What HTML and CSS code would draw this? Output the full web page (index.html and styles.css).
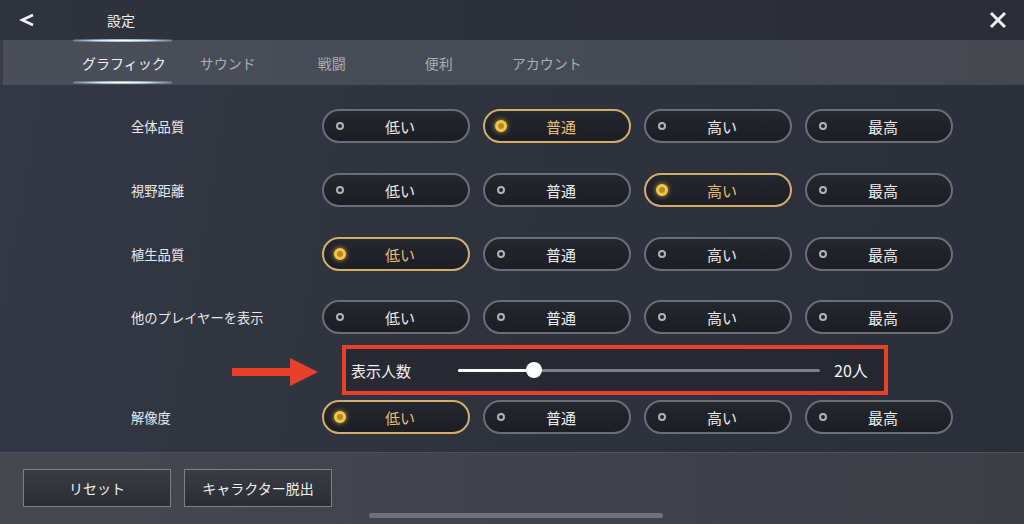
FILE: index.html
```html
<!DOCTYPE html>
<html lang="ja">
<head>
  <meta charset="UTF-8">
  <title>設定</title>
  <link rel="stylesheet" href="styles.css">
</head>
<body>

<div class="screen">
  <div class="topbar">
    <svg class="back" width="16" height="14" viewBox="0 0 16 14"><path d="M14 2 L3 7 L14 12" fill="none" stroke="#f2f2f2" stroke-width="2.6" stroke-linejoin="miter"/></svg>
    <span class="title">設定</span>
    <svg class="close" width="18" height="18" viewBox="0 0 18 18"><path d="M2 2 L16 16 M16 2 L2 16" stroke="#eeeeee" stroke-width="3"/></svg>
  </div>

  <div class="tabs">
    <span class="tab active">グラフィック</span>
    <span class="tab t2">サウンド</span>
    <span class="tab t3">戦闘</span>
    <span class="tab t4">便利</span>
    <span class="tab t5">アカウント</span>
  </div>

  <div class="content">
    <div class="row">
      <span class="label">全体品質</span>
      <div class="options">
        <div class="opt"><i class="dot"></i>低い</div>
        <div class="opt on"><i class="dot"></i>普通</div>
        <div class="opt"><i class="dot"></i>高い</div>
        <div class="opt"><i class="dot"></i>最高</div>
      </div>
    </div>
    <div class="row">
      <span class="label">視野距離</span>
      <div class="options">
        <div class="opt"><i class="dot"></i>低い</div>
        <div class="opt"><i class="dot"></i>普通</div>
        <div class="opt on"><i class="dot"></i>高い</div>
        <div class="opt"><i class="dot"></i>最高</div>
      </div>
    </div>
    <div class="row">
      <span class="label">植生品質</span>
      <div class="options">
        <div class="opt on"><i class="dot"></i>低い</div>
        <div class="opt"><i class="dot"></i>普通</div>
        <div class="opt"><i class="dot"></i>高い</div>
        <div class="opt"><i class="dot"></i>最高</div>
      </div>
    </div>
    <div class="row">
      <span class="label">他のプレイヤーを表示</span>
      <div class="options">
        <div class="opt"><i class="dot"></i>低い</div>
        <div class="opt"><i class="dot"></i>普通</div>
        <div class="opt"><i class="dot"></i>高い</div>
        <div class="opt"><i class="dot"></i>最高</div>
      </div>
    </div>

    <div class="slider-row">
      <svg class="arrow" width="86" height="28" viewBox="0 0 86 28"><path d="M0 10 H58 V0 L86 14 L58 28 V18 H0 Z" fill="#e8412b"/></svg>
      <div class="slider-box">
        <span class="slider-label">表示人数</span>
        <div class="track">
          <div class="fill"></div>
          <div class="thumb"></div>
        </div>
        <span class="slider-value">20人</span>
      </div>
    </div>

    <div class="row">
      <span class="label">解像度</span>
      <div class="options">
        <div class="opt on"><i class="dot"></i>低い</div>
        <div class="opt"><i class="dot"></i>普通</div>
        <div class="opt"><i class="dot"></i>高い</div>
        <div class="opt"><i class="dot"></i>最高</div>
      </div>
    </div>
  </div>

  <div class="bottombar">
    <div class="actions">
      <div class="action">リセット</div>
      <div class="action">キャラクター脱出</div>
    </div>
    <div class="home"></div>
  </div>
</div>

</body>
</html>
```

FILE: styles.css
```css
:root {
  --text: #e8e8ea;
  --muted: #a9acb3;
  --gold: #d2ae6c;
  --gold-text: #e9bd74;
  --red: #e8412b;
}

body {
  margin: 0;
  background: #2e323c;
  font-family: "Noto Sans CJK JP", "Noto Sans", sans-serif;
  color: var(--text);
}

.screen {
  width: 1024px;
  height: 524px;
  display: flex;
  flex-direction: column;
  overflow: hidden;
  background: linear-gradient(100deg, #343844 0%, #2f333e 45%, #2b2f39 100%);
}

.topbar {
  flex-shrink: 0;
  height: 40px;
  display: flex;
  align-items: center;
  background: linear-gradient(90deg, #2f333d, #2a2d36);
}

.back {
  margin-left: 19px;
}

.title {
  margin-left: 72px;
  font-size: 14px;
  color: #f0f0f0;
}

.close {
  margin-left: auto;
  margin-right: 17px;
}

.tabs {
  flex-shrink: 0;
  height: 45px;
  display: flex;
  background: linear-gradient(90deg, #4a4e57 0%, #474b55 50%, #45484f 100%);
  border-left: 3px solid #3a3d45;
  box-sizing: border-box;
  font-size: 14px;
  color: var(--muted);
}

.tab {
  position: relative;
  display: flex;
  align-items: center;
}

.tab.active {
  margin-left: 79px;
  color: #f2f2f2;
}

.tab.active::before,
.tab.active::after {
  content: "";
  position: absolute;
  left: -9px;
  right: -6px;
  height: 3px;
  border-radius: 2px;
  background: radial-gradient(ellipse at center, #ffffff 0%, #d6e8f6 35%, rgba(150,190,220,0.45) 70%, rgba(150,190,220,0) 100%);
}

.tab.active::before {
  top: -1px;
}

.tab.active::after {
  bottom: 1px;
}

.t2 { margin-left: 34px; }
.t3 { margin-left: 62px; }
.t4 { margin-left: 79px; }
.t5 { margin-left: 59px; }

.content {
  flex: 1;
  min-height: 0;
  padding-top: 24px;
  display: flex;
  flex-direction: column;
}

.row {
  flex-shrink: 0;
  display: flex;
  align-items: center;
  height: 34px;
  margin-bottom: 30px;
}

.row:nth-child(3) {
  margin-bottom: 29px;
}

.row:nth-child(4) {
  margin-bottom: 11px;
}

.label {
  width: 191px;
  padding-left: 131px;
  font-size: 13.3px;
  color: var(--text);
}

.options {
  display: grid;
  grid-template-columns: repeat(4, 148px);
  gap: 13px;
}

.opt {
  position: relative;
  height: 34px;
  box-sizing: border-box;
  border: 2px solid #6b6e76;
  border-radius: 17px;
  background: linear-gradient(180deg, #25272e 0%, #1c1e24 100%);
  display: flex;
  align-items: center;
  justify-content: center;
  padding-left: 8px;
  font-size: 15px;
  color: #ececec;
}

.dot {
  position: absolute;
  left: 12px;
  top: 11px;
  width: 8px;
  height: 8px;
  box-sizing: border-box;
  border: 2px solid #b3b3b3;
  border-radius: 50%;
}

.opt.on {
  border-color: var(--gold);
  color: var(--gold-text);
}

.opt.on .dot {
  left: 10px;
  top: 9px;
  width: 12px;
  height: 12px;
  border: 3px solid #f3c548;
  background: #b58a23;
  box-shadow: 0 0 5px rgba(255, 205, 80, 0.8);
}

.slider-row {
  flex-shrink: 0;
  display: flex;
  align-items: center;
  padding-left: 232px;
  margin-bottom: 5px;
}

.arrow {
  margin-top: 4px;
}

.slider-box {
  margin-left: 24px;
  width: 546px;
  height: 50px;
  box-sizing: border-box;
  border: 4px solid var(--red);
  background: rgba(32, 34, 42, 0.55);
  display: flex;
  align-items: center;
  padding-left: 5px;
}

.slider-label {
  font-size: 15px;
  color: #f0f0f0;
}

.track {
  position: relative;
  margin-left: 47px;
  width: 362px;
  height: 3px;
  border-radius: 2px;
  background: #7c7f87;
}

.fill {
  width: 76px;
  height: 3px;
  border-radius: 2px;
  background: #ffffff;
}

.thumb {
  position: absolute;
  left: 68px;
  top: -7px;
  width: 16px;
  height: 16px;
  border-radius: 50%;
  background: #ffffff;
}

.slider-value {
  margin-left: 14px;
  font-size: 16px;
  color: #f2f2f2;
}

.bottombar {
  flex-shrink: 0;
  height: 72px;
  box-sizing: border-box;
  padding-top: 16px;
  background: linear-gradient(90deg, #45484f 0%, #40434b 50%, #3c3f46 100%);
  border-top: 1px solid #4e5158;
}

.actions {
  display: flex;
  gap: 13px;
  padding-left: 23px;
}

.action {
  width: 148px;
  height: 38px;
  box-sizing: border-box;
  border: 1px solid #7d8087;
  background: linear-gradient(180deg, #393c43 0%, #2b2d33 100%);
  display: flex;
  align-items: center;
  justify-content: center;
  font-size: 14px;
  color: #f0f0f0;
}

.home {
  margin: 6px 0 0 369px;
  width: 294px;
  height: 5px;
  border-radius: 3px;
  background: #6e717a;
}
```
